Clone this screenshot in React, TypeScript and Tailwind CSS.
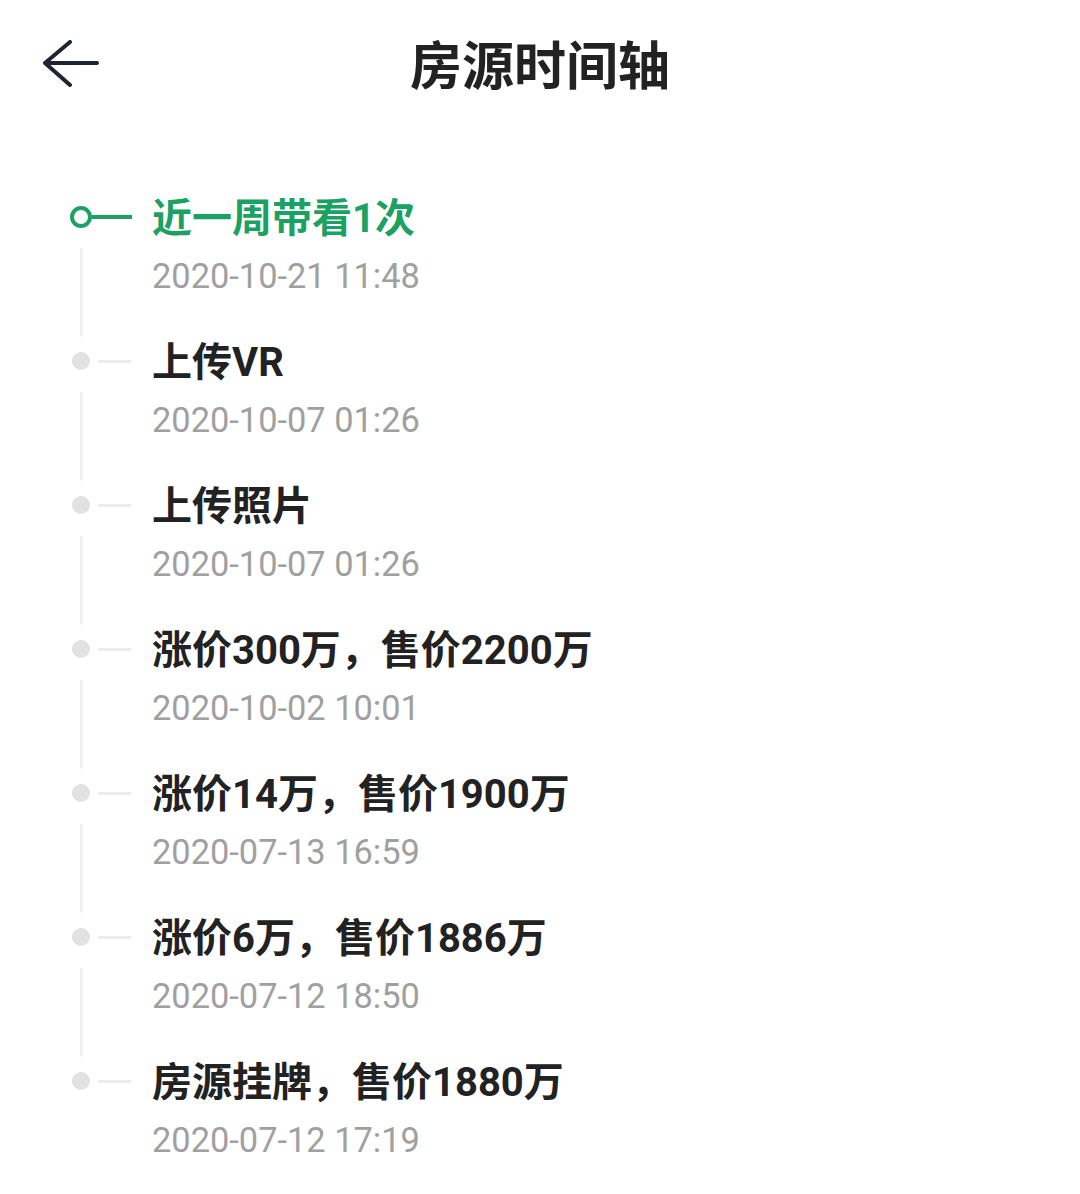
import React from "react";

type Event = {
  title: string;
  time: string;
};

const EVENTS: Event[] = [
  { title: "近一周带看1次", time: "2020-10-21 11:48" },
  { title: "上传VR", time: "2020-10-07 01:26" },
  { title: "上传照片", time: "2020-10-07 01:26" },
  { title: "涨价300万，售价2200万", time: "2020-10-02 10:01" },
  { title: "涨价14万，售价1900万", time: "2020-07-13 16:59" },
  { title: "涨价6万，售价1886万", time: "2020-07-12 18:50" },
  { title: "房源挂牌，售价1880万", time: "2020-07-12 17:19" },
];

const FONT = "font-['Roboto','Noto_Sans_CJK_SC',sans-serif]";

const BackArrow = () => (
  <svg width="60" height="52" viewBox="0 0 60 52" fill="none">
    <path
      d="M55 23H3M28 2L3 23L28 45"
      stroke="#1e2433"
      strokeWidth="4"
      strokeLinecap="round"
      strokeLinejoin="round"
    />
  </svg>
);

const Marker = ({ active }: { active: boolean }) =>
  active ? (
    <div className="flex items-center h-12">
      <div className="w-[22px] h-[22px] rounded-full border-4 border-[#1ba162] shrink-0" />
      <div className="w-[40px] h-[4px] bg-[#1ba162]" />
    </div>
  ) : (
    <div className="flex items-center h-12 pl-[2px]">
      <div className="w-[18px] h-[18px] rounded-full bg-[#e2e2e2] shrink-0" />
      <div className="ml-[8px] w-[33px] h-[3px] bg-[#ececec]" />
    </div>
  );

const TimelineItem = ({ event, index, last }: { event: Event; index: number; last: boolean }) => {
  const active = index === 0;
  return (
    <div className="flex h-[144px]">
      <div className="w-[152px] pl-[70px] flex flex-col">
        <Marker active={active} />
        {!last && <div className="ml-[10px] mt-[7px] flex-1 w-[3px] bg-[#f1f1f1]" />}
      </div>
      <div className="flex flex-col">
        <div
          className={`h-12 leading-[52px] text-[40px] font-bold ${active ? "text-[#1ba162]" : "text-[#222222]"}`}
        >
          {event.title}
        </div>
        <div className="mt-[15px] h-10 leading-[40px] text-[34.4px] text-[#a0a0a0]">{event.time}</div>
      </div>
    </div>
  );
};

export default function App() {
  return (
    <div className={`w-[1080px] h-[1194px] bg-white overflow-hidden ${FONT}`}>
      <div className="relative h-[136px] flex items-center justify-center">
        <div className="absolute left-[42px] top-[40px]">
          <BackArrow />
        </div>
        <h1 className="text-[52px] font-bold text-[#222222] leading-none">房源时间轴</h1>
      </div>
      <div className="pt-[57px]">
        {EVENTS.map((e, i) => (
          <TimelineItem key={i} event={e} index={i} last={i === EVENTS.length - 1} />
        ))}
      </div>
    </div>
  );
}
